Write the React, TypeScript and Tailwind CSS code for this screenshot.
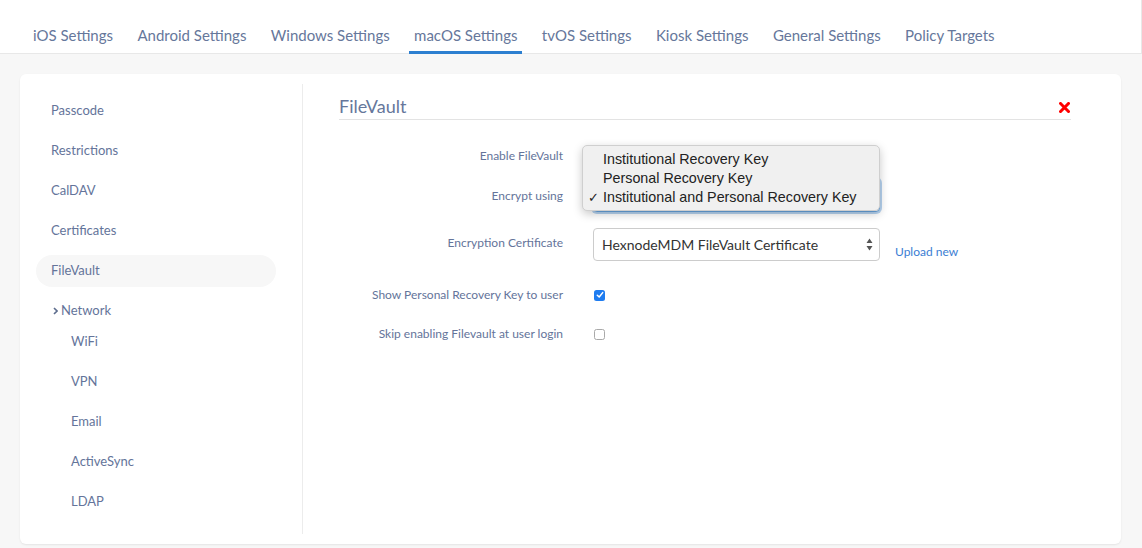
import React from "react"

const tabs = [
  "iOS Settings",
  "Android Settings",
  "Windows Settings",
  "macOS Settings",
  "tvOS Settings",
  "Kiosk Settings",
  "General Settings",
  "Policy Targets",
]

const menuTop = ["Passcode", "Restrictions", "CalDAV", "Certificates", "FileVault"]
const networkItems = ["WiFi", "VPN", "Email", "ActiveSync", "LDAP"]

const encryptOptions = [
  { label: "Institutional Recovery Key", checked: false },
  { label: "Personal Recovery Key", checked: false },
  { label: "Institutional and Personal Recovery Key", checked: true },
]

const Checkbox = ({ checked }: { checked: boolean }) =>
  checked ? (
    <span className="flex h-[11px] w-[11px] items-center justify-center rounded-[2.5px] bg-[#1e7cf0]">
      <svg width="8" height="8" viewBox="0 0 8 8">
        <path d="M1.3 4.2 L3.2 6 L6.7 1.6" fill="none" stroke="#fff" strokeWidth="1.5" strokeLinecap="round" strokeLinejoin="round" />
      </svg>
    </span>
  ) : (
    <span className="block h-[11px] w-[11px] rounded-[2.5px] border border-[#a9a9a9] bg-white" />
  )

const FormLabel = ({ children }: { children: React.ReactNode }) => (
  <div className="w-[224px] shrink-0 text-right text-[12px] text-[#64749a]">{children}</div>
)

const App = () => {
  return (
    <div className="h-[548px] w-[1142px] overflow-hidden bg-[#f7f7f7] font-['Lato',sans-serif]">
      {/* Tabs */}
      <div className="flex h-[54px] gap-[24.4px] border-b border-r border-[#e8e8e8] bg-white pl-[33px]">
        {tabs.map((tab) => (
          <div key={tab} className="relative h-full pt-[26px] text-[15px] leading-[18px] text-[#66779b]">
            {tab}
            {tab === "macOS Settings" && (
              <span className="absolute -bottom-px -left-[5px] -right-[5px] h-[3px] bg-[#2c7fd0]" />
            )}
          </div>
        ))}
      </div>

      {/* Card */}
      <div className="ml-[20px] mt-[20px] flex h-[470px] w-[1101px] rounded-md bg-white py-[10px] shadow-[0_1px_2px_rgba(0,0,0,0.08)]">
        {/* Sidebar */}
        <div className="w-[283px] shrink-0 border-r border-[#ececec] pl-[16px] pt-[11px] text-[13px] text-[#64749a]">
          {menuTop.map((item) => (
            <div
              key={item}
              className={`mb-[8px] flex h-[32px] w-[240px] items-center rounded-full px-[15px] ${
                item === "FileVault" ? "bg-[#f7f7f7]" : ""
              }`}
            >
              {item}
            </div>
          ))}
          <div className="-mb-px flex h-[32px] w-[240px] items-center gap-[3px] pl-[17px]">
            <svg width="5" height="8" viewBox="0 0 5 8">
              <path d="M1 1 L4 4 L1 7" fill="none" stroke="#5d6d8e" strokeWidth="1.6" />
            </svg>
            Network
          </div>
          {networkItems.map((item) => (
            <div key={item} className="mb-[8px] flex h-[32px] w-[240px] items-center pl-[35px]">
              {item}
            </div>
          ))}
        </div>

        {/* Main */}
        <div className="flex-1 pl-[36px] pr-[50px] pt-[11px]">
          <div className="flex items-center justify-between border-b border-[#e3e3e3] pb-[2px]">
            <h2 className="text-[18px] leading-[22px] text-[#66779b]">FileVault</h2>
            <svg width="11" height="11" viewBox="0 0 11 11" className="mr-[1px] mt-[2px]">
              <path d="M1.5 1.5 L9.5 9.5 M9.5 1.5 L1.5 9.5" stroke="#f00" strokeWidth="3" strokeLinecap="square" />
            </svg>
          </div>

          {/* Enable FileVault */}
          <div className="mt-[20px] flex h-[32px] items-center gap-[30px]">
            <FormLabel>Enable FileVault</FormLabel>
            <div className="pl-px">
              <Checkbox checked />
            </div>
          </div>

          {/* Encrypt using */}
          <div className="mt-[7px] flex h-[33px] items-center gap-[30px]">
            <FormLabel>Encrypt using</FormLabel>
            <div className="relative h-[33px] w-[287px] rounded-[4px] border border-[#6aa6e0] bg-white shadow-[0_0_0_2px_rgba(94,158,222,0.45)]">
              <div className="absolute -left-[12px] -top-[35px] z-10 h-[66px] w-[298px] rounded-[5px] border border-[#cfcfcf] bg-[#f0f0f0] pb-[5px] pt-[4px] font-['Liberation_Sans',Arial,sans-serif] text-[14.3px] leading-[19px] text-[#222] shadow-[0_3px_10px_rgba(0,0,0,0.22)]">
                {encryptOptions.map((opt) => (
                  <div key={opt.label} className="relative h-[19px] pl-[20px]">
                    {opt.checked && <span className="absolute left-[5px] top-0 text-[13px]">✓</span>}
                    {opt.label}
                  </div>
                ))}
              </div>
            </div>
          </div>

          {/* Encryption Certificate */}
          <div className="mt-[16px] flex h-[33px] items-center gap-[30px]">
            <FormLabel>
              <span className="relative -top-[2px]">Encryption Certificate</span>
            </FormLabel>
            <div className="flex h-[33px] w-[287px] items-center justify-between rounded-[4px] border border-[#cccccc] bg-white pl-[8px] pr-[6px] text-[14px] text-[#333]">
              <span>HexnodeMDM FileVault Certificate</span>
              <svg width="7" height="13" viewBox="0 0 7 13">
                <path d="M3.5 0.5 L6.5 5 L0.5 5 Z M3.5 12.5 L6.5 8 L0.5 8 Z" fill="#555" />
              </svg>
            </div>
            <a className="-ml-[15px] mt-[15px] text-[12px] text-[#3b7dd3]">Upload new</a>
          </div>

          {/* Show personal recovery key */}
          <div className="mt-[24px] flex h-[20px] items-center gap-[30px]">
            <FormLabel>Show Personal Recovery Key to user</FormLabel>
            <div className="pl-px">
              <Checkbox checked />
            </div>
          </div>

          {/* Skip enabling */}
          <div className="mt-[19px] flex h-[20px] items-center gap-[30px]">
            <FormLabel>Skip enabling Filevault at user login</FormLabel>
            <div className="pl-px">
              <Checkbox checked={false} />
            </div>
          </div>
        </div>
      </div>
    </div>
  )
}

export default App
